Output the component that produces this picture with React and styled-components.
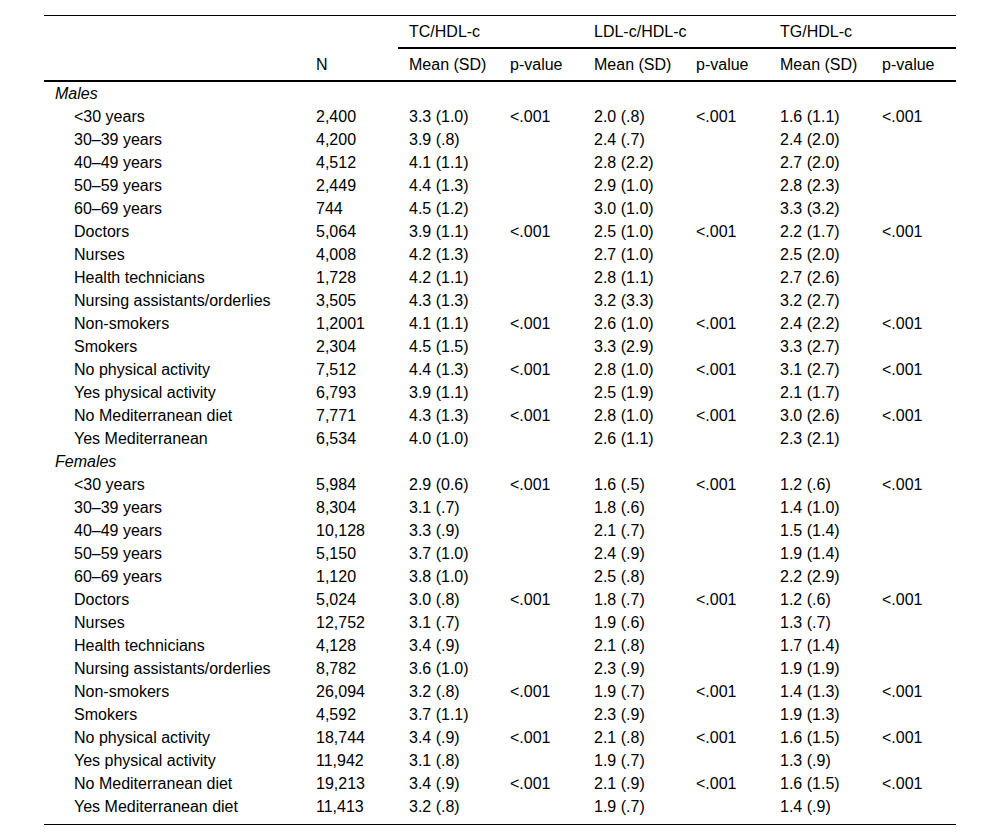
import React from "react";
import styled, { createGlobalStyle } from "styled-components";

const GlobalStyle = createGlobalStyle`
  html, body {
    margin: 0;
    padding: 0;
    background: #ffffff;
  }
  body {
    font-family: "Liberation Sans", Arial, sans-serif;
    color: #000000;
  }
`;

const Page = styled.div`
  padding: 15px 44px 0 44px;
`;

const Table = styled.table`
  width: 912px;
  table-layout: fixed;
  border-collapse: separate;
  border-spacing: 0;
  border-top: 1px solid #000;
  border-bottom: 1px solid #000;
  font-size: 16px;
  color: #000;
`;

const HeadCell = styled.th`
  font-weight: normal;
  text-align: left;
  padding: 0 0 0 11px;
  height: 31px;
  line-height: 20px;
  vertical-align: middle;
  white-space: nowrap;
  border-bottom: ${(p) => (p.$rule ? "2px solid #000" : "none")};
`;

const Cell = styled.td`
  padding: 0 0 ${(p) => (p.$last ? "6px" : "0")} 11px;
  height: 23px;
  line-height: 23px;
  vertical-align: top;
  white-space: nowrap;
`;

const LabelCell = styled(Cell)`
  padding-left: ${(p) => (p.$indent ? "30px" : "11px")};
  font-style: ${(p) => (p.$section ? "italic" : "normal")};
`;

const widths = [261, 93, 101, 84, 102, 84, 102, 85];

const males = [
  ["<30 years", "2,400", "3.3 (1.0)", "<.001", "2.0 (.8)", "<.001", "1.6 (1.1)", "<.001"],
  ["30–39 years", "4,200", "3.9 (.8)", "", "2.4 (.7)", "", "2.4 (2.0)", ""],
  ["40–49 years", "4,512", "4.1 (1.1)", "", "2.8 (2.2)", "", "2.7 (2.0)", ""],
  ["50–59 years", "2,449", "4.4 (1.3)", "", "2.9 (1.0)", "", "2.8 (2.3)", ""],
  ["60–69 years", "744", "4.5 (1.2)", "", "3.0 (1.0)", "", "3.3 (3.2)", ""],
  ["Doctors", "5,064", "3.9 (1.1)", "<.001", "2.5 (1.0)", "<.001", "2.2 (1.7)", "<.001"],
  ["Nurses", "4,008", "4.2 (1.3)", "", "2.7 (1.0)", "", "2.5 (2.0)", ""],
  ["Health technicians", "1,728", "4.2 (1.1)", "", "2.8 (1.1)", "", "2.7 (2.6)", ""],
  ["Nursing assistants/orderlies", "3,505", "4.3 (1.3)", "", "3.2 (3.3)", "", "3.2 (2.7)", ""],
  ["Non-smokers", "1,2001", "4.1 (1.1)", "<.001", "2.6 (1.0)", "<.001", "2.4 (2.2)", "<.001"],
  ["Smokers", "2,304", "4.5 (1.5)", "", "3.3 (2.9)", "", "3.3 (2.7)", ""],
  ["No physical activity", "7,512", "4.4 (1.3)", "<.001", "2.8 (1.0)", "<.001", "3.1 (2.7)", "<.001"],
  ["Yes physical activity", "6,793", "3.9 (1.1)", "", "2.5 (1.9)", "", "2.1 (1.7)", ""],
  ["No Mediterranean diet", "7,771", "4.3 (1.3)", "<.001", "2.8 (1.0)", "<.001", "3.0 (2.6)", "<.001"],
  ["Yes Mediterranean", "6,534", "4.0 (1.0)", "", "2.6 (1.1)", "", "2.3 (2.1)", ""],
];

const females = [
  ["<30 years", "5,984", "2.9 (0.6)", "<.001", "1.6 (.5)", "<.001", "1.2 (.6)", "<.001"],
  ["30–39 years", "8,304", "3.1 (.7)", "", "1.8 (.6)", "", "1.4 (1.0)", ""],
  ["40–49 years", "10,128", "3.3 (.9)", "", "2.1 (.7)", "", "1.5 (1.4)", ""],
  ["50–59 years", "5,150", "3.7 (1.0)", "", "2.4 (.9)", "", "1.9 (1.4)", ""],
  ["60–69 years", "1,120", "3.8 (1.0)", "", "2.5 (.8)", "", "2.2 (2.9)", ""],
  ["Doctors", "5,024", "3.0 (.8)", "<.001", "1.8 (.7)", "<.001", "1.2 (.6)", "<.001"],
  ["Nurses", "12,752", "3.1 (.7)", "", "1.9 (.6)", "", "1.3 (.7)", ""],
  ["Health technicians", "4,128", "3.4 (.9)", "", "2.1 (.8)", "", "1.7 (1.4)", ""],
  ["Nursing assistants/orderlies", "8,782", "3.6 (1.0)", "", "2.3 (.9)", "", "1.9 (1.9)", ""],
  ["Non-smokers", "26,094", "3.2 (.8)", "<.001", "1.9 (.7)", "<.001", "1.4 (1.3)", "<.001"],
  ["Smokers", "4,592", "3.7 (1.1)", "", "2.3 (.9)", "", "1.9 (1.3)", ""],
  ["No physical activity", "18,744", "3.4 (.9)", "<.001", "2.1 (.8)", "<.001", "1.6 (1.5)", "<.001"],
  ["Yes physical activity", "11,942", "3.1 (.8)", "", "1.9 (.7)", "", "1.3 (.9)", ""],
  ["No Mediterranean diet", "19,213", "3.4 (.9)", "<.001", "2.1 (.9)", "<.001", "1.6 (1.5)", "<.001"],
  ["Yes Mediterranean diet", "11,413", "3.2 (.8)", "", "1.9 (.7)", "", "1.4 (.9)", ""],
];

const sections = [
  { title: "Males", rows: males },
  { title: "Females", rows: females },
];

function DataRow({ row, last }) {
  const [label, ...values] = row;
  return (
    <tr>
      <LabelCell $indent $last={last}>{label}</LabelCell>
      {values.map((v, i) => (
        <Cell key={i} $last={last}>{v}</Cell>
      ))}
    </tr>
  );
}

export default function App() {
  return (
    <Page>
      <GlobalStyle />
      <Table>
        <colgroup>
          {widths.map((w, i) => (
            <col key={i} style={{ width: w }} />
          ))}
        </colgroup>
        <thead>
          <tr>
            <HeadCell />
            <HeadCell />
            <HeadCell colSpan={2} $rule>TC/HDL-c</HeadCell>
            <HeadCell colSpan={2} $rule>LDL-c/HDL-c</HeadCell>
            <HeadCell colSpan={2} $rule>TG/HDL-c</HeadCell>
          </tr>
          <tr>
            <HeadCell $rule />
            <HeadCell $rule>N</HeadCell>
            <HeadCell $rule>Mean (SD)</HeadCell>
            <HeadCell $rule>p-value</HeadCell>
            <HeadCell $rule>Mean (SD)</HeadCell>
            <HeadCell $rule>p-value</HeadCell>
            <HeadCell $rule>Mean (SD)</HeadCell>
            <HeadCell $rule>p-value</HeadCell>
          </tr>
        </thead>
        <tbody>
          {sections.map((s, si) => (
            <React.Fragment key={s.title}>
              <tr>
                <LabelCell $section colSpan={8}>{s.title}</LabelCell>
              </tr>
              {s.rows.map((r, ri) => (
                <DataRow
                  key={ri}
                  row={r}
                  last={si === sections.length - 1 && ri === s.rows.length - 1}
                />
              ))}
            </React.Fragment>
          ))}
        </tbody>
      </Table>
    </Page>
  );
}
